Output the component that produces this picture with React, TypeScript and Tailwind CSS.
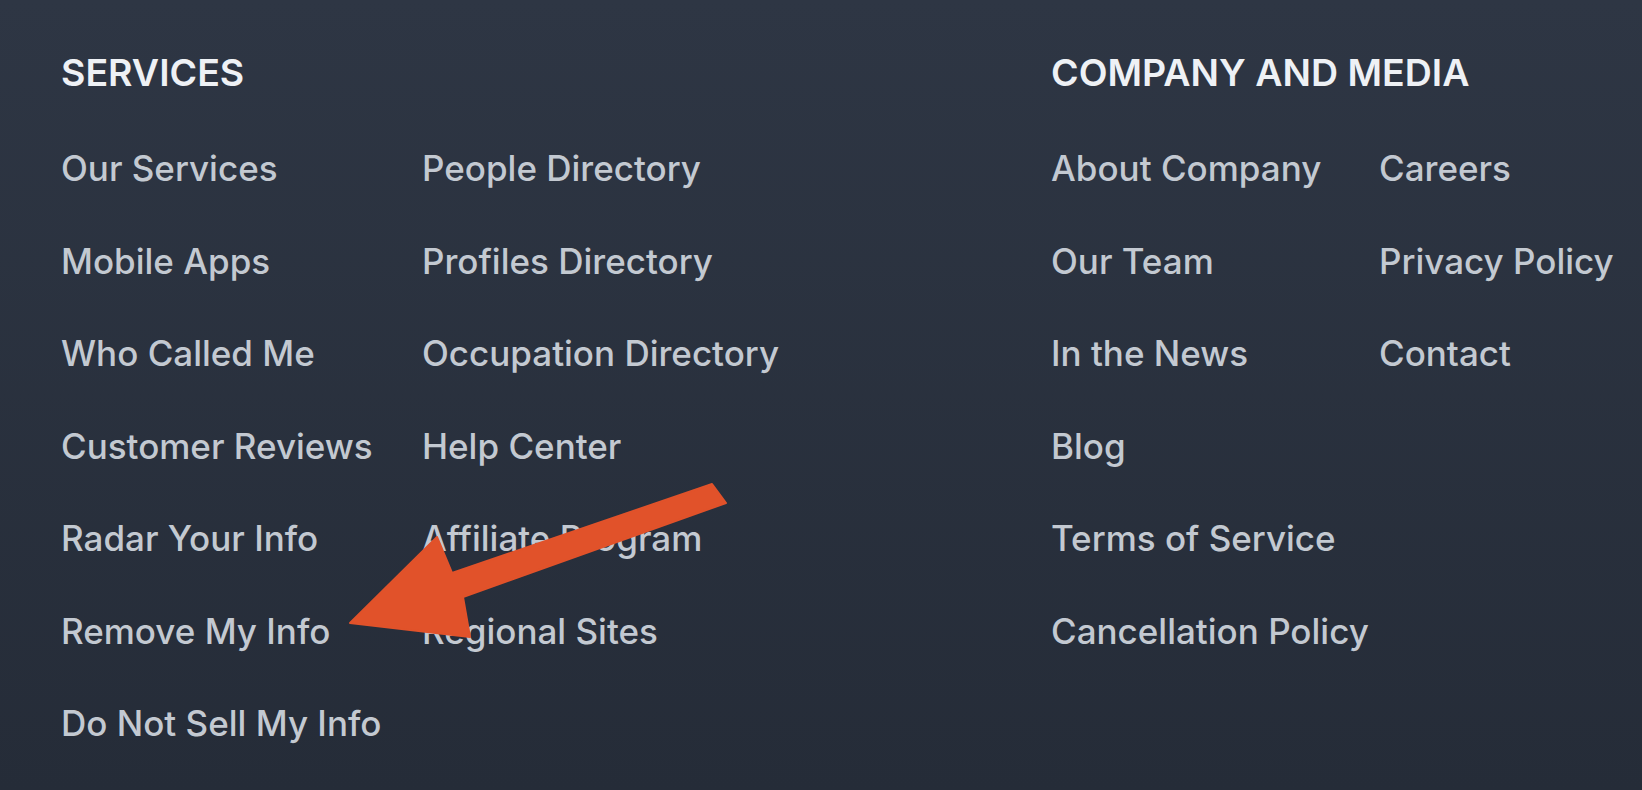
import React from 'react'

const services = [
  ['Our Services', 'Mobile Apps', 'Who Called Me', 'Customer Reviews', 'Radar Your Info', 'Remove My Info', 'Do Not Sell My Info'],
  ['People Directory', 'Profiles Directory', 'Occupation Directory', 'Help Center', 'Affiliate Program', 'Regional Sites'],
]

const company = [
  ['About Company', 'Our Team', 'In the News', 'Blog', 'Terms of Service', 'Cancellation Policy'],
  ['Careers', 'Privacy Policy', 'Contact'],
]

function LinkColumn({ links, width }: { links: string[]; width: string }) {
  return (
    <ul className={`flex flex-col ${width}`}>
      {links.map((l) => (
        <li key={l} className="h-[92.5px] leading-[92.5px] whitespace-nowrap">
          <a href="#" className="text-[#c3c9d1] hover:text-white">
            {l}
          </a>
        </li>
      ))}
    </ul>
  )
}

function FooterSection({ title, cols, widths }: { title: string; cols: string[][]; widths: string[] }) {
  return (
    <div>
      <h2 className="text-[37.5px] leading-[40px] font-semibold text-[#eef1f5]">{title}</h2>
      <div className="flex mt-[29px]">
        {cols.map((c, i) => (
          <LinkColumn key={i} links={c} width={widths[i]} />
        ))}
      </div>
    </div>
  )
}

export default function App() {
  return (
    <footer
      className="relative w-full h-[790px] overflow-hidden bg-gradient-to-b from-[#2e3644] to-[#252c38] text-[35px] font-medium"
      style={{ fontFamily: 'Inter, "Noto Sans", sans-serif' }}
    >
      <div className="flex pl-[61px] pt-[53px]">
        <div className="w-[990px]">
          <FooterSection title="SERVICES" cols={services} widths={['w-[361px]', 'w-auto']} />
        </div>
        <FooterSection title="COMPANY AND MEDIA" cols={company} widths={['w-[328px]', 'w-auto']} />
      </div>

      {/* annotation arrow drawn over the links */}
      <svg className="absolute inset-0 pointer-events-none" width="1642" height="790" viewBox="0 0 1642 790">
        <polygon
          points="350,623 437,537 452,573 712,484 726,503 463,597 470,637"
          fill="#e1522a"
          stroke="#e1522a"
          strokeWidth="2"
          strokeLinejoin="round"
        />
      </svg>
    </footer>
  )
}
